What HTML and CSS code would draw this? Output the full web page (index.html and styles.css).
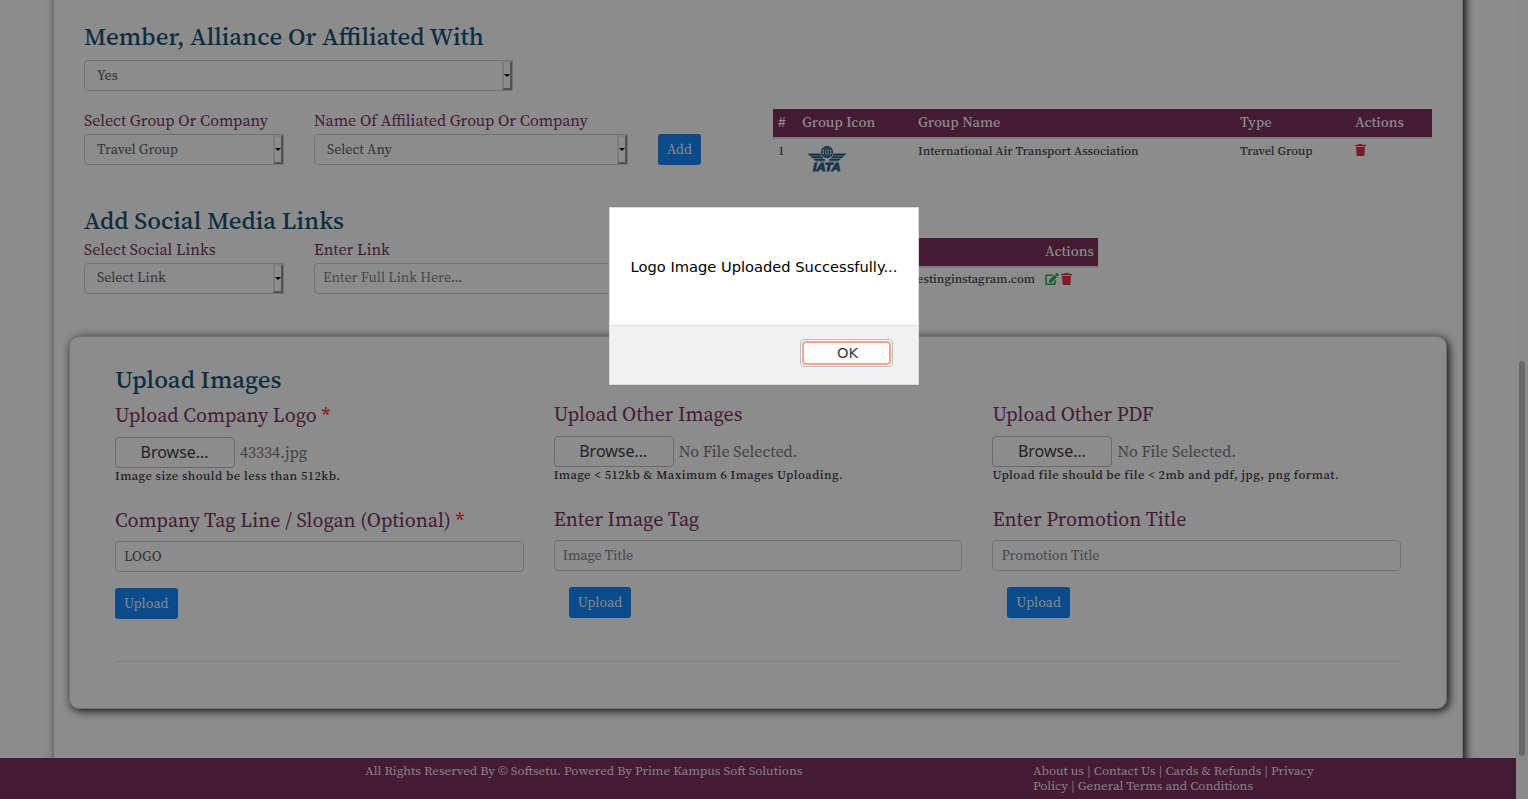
FILE: index.html
```html
<!DOCTYPE html>
<html lang="en">
<head>
<meta charset="utf-8">
<title>Company Profile</title>
<link rel="stylesheet" href="styles.css">
</head>
<body>
<svg class="defs" width="0" height="0">
  <symbol id="trash" viewBox="0 0 448 512" preserveAspectRatio="none"><path fill="currentColor" d="M42 128l22 350a36 36 0 0 0 36 34h248a36 36 0 0 0 36-34l22-350zM432 32H312l-9.400-18.700A24 24 0 0 0 281.100 0H166.800a23.700 23.700 0 0 0-21.400 13.300L136 32H16A16 16 0 0 0 0 48v32a16 16 0 0 0 16 16h416a16 16 0 0 0 16-16V48a16 16 0 0 0-16-16z"/></symbol>
  <symbol id="edit" viewBox="0 0 576 512"><path fill="currentColor" d="M402.600 83.200l90.200 90.200c3.800 3.800 3.800 10 0 13.800L274.400 405.600l-92.800 10.300c-12.400 1.400-22.900-9.100-21.500-21.500l10.300-92.800L388.800 83.200c3.800-3.800 10-3.800 13.800 0zm162-22.900l-48.800-48.800c-15.200-15.200-39.900-15.200-55.200 0l-35.400 35.400c-3.800 3.800-3.800 10 0 13.800l90.200 90.200c3.800 3.800 10 3.800 13.800 0l35.400-35.400c15.200-15.300 15.200-40 0-55.200zM384 346.200V448H64V128h229.800c3.200 0 6.200-1.300 8.500-3.500l40-40c7.600-7.600 2.200-20.500-8.500-20.500H48C21.500 64 0 85.500 0 112v352c0 26.500 21.500 48 48 48h352c26.500 0 48-21.500 48-48V306.200c0-10.700-12.900-16-20.500-8.500l-40 40c-2.200 2.300-3.500 5.300-3.500 8.500z"/></symbol>
</svg>
<div class="page">
  <div class="main">
    <div class="content">
      <div class="container">
        <h4 class="title">Member, Alliance Or Affiliated With</h4>
        <div class="select select-wide"><span>Yes</span><i class="arrow"></i></div>

        <div class="row row-group">
          <div class="field field-a"><label>Select Group Or Company</label><div class="select"><span>Travel Group</span><i class="arrow"></i></div></div>
          <div class="field field-b"><label>Name Of Affiliated Group Or Company</label><div class="select"><span>Select Any</span><i class="arrow"></i></div></div>
          <button class="btn btn-add">Add</button>
          <div class="table table-groups">
            <div class="tr th"><span>#</span><span>Group Icon</span><span>Group Name</span><span>Type</span><span>Actions</span></div>
            <div class="tr td">
              <span>1</span>
              <span><svg class="iata" width="40" height="28" viewBox="0 0 40 28">
                <g fill="none" stroke="#13334b"><circle cx="20" cy="7" r="5.400" stroke-width="1.400"/><ellipse cx="20" cy="7" rx="2.500" ry="5.400" stroke-width="1.200"/><path d="M20 1.500v11M14.500 7h11M15.500 4h9M15.500 10h9" stroke-width="1.200"/></g>
                <g fill="#13334b"><path d="M.5 8.600H13l2.500 4.400 2.500 2.500-1 1.200H9.500zM39.500 8.600H27L24.500 13 22 15.500l1 1.200h7.500z" opacity=".45"/><path d="M1 8.800h12.300l1 1.700H2.300zM3.500 11.500h11.300l1.500 1.600H5zM6.500 14h11l1 1.500H8zM39 8.800H26.700l-1 1.700h12zM36.500 11.500H25.200l-1.500 1.600H35zM33.500 14h-11l-1 1.500H32z"/></g>
                <text x="6" y="26.200" textLength="27.500" lengthAdjust="spacingAndGlyphs">IATA</text>
              </svg></span>
              <span>International Air Transport Association</span><span>Travel Group</span>
              <span><svg class="ico red" width="11" height="12"><use href="#trash"/></svg></span>
            </div>
          </div>
        </div>

        <h4 class="title title-social">Add Social Media Links</h4>
        <div class="row row-social">
          <div class="field field-a"><label>Select Social Links</label><div class="select"><span>Select Link</span><i class="arrow"></i></div></div>
          <div class="field field-b"><label>Enter Link</label><div class="input placeholder">Enter Full Link Here...</div></div>
          <div class="table table-links">
            <div class="tr th"><span></span><span>Actions</span></div>
            <div class="tr td"><span class="link">estinginstagram.com</span><span class="acts"><svg class="ico green" width="14" height="12"><use href="#edit"/></svg><svg class="ico red" width="11" height="12"><use href="#trash"/></svg></span></div>
          </div>
        </div>

        <div class="card">
          <h4 class="title">Upload Images</h4>
          <div class="uploads">
            <div class="upload first">
              <label>Upload Company Logo <b>*</b></label>
              <div class="file"><span class="browse">Browse…</span><span>43334.jpg</span></div>
              <p class="note">Image size should be less than 512kb.</p>
              <label>Company Tag Line / Slogan (Optional) <b>*</b></label>
              <div class="input">LOGO</div>
              <button class="btn">Upload</button>
            </div>
            <div class="upload">
              <label>Upload Other Images</label>
              <div class="file"><span class="browse">Browse…</span><span>No File Selected.</span></div>
              <p class="note">Image &lt; 512kb &amp; Maximum 6 Images Uploading.</p>
              <label>Enter Image Tag</label>
              <div class="input placeholder">Image Title</div>
              <button class="btn indent">Upload</button>
            </div>
            <div class="upload">
              <label>Upload Other PDF</label>
              <div class="file"><span class="browse">Browse…</span><span>No File Selected.</span></div>
              <p class="note">Upload file should be file &lt; 2mb and pdf, jpg, png format.</p>
              <label>Enter Promotion Title</label>
              <div class="input placeholder">Promotion Title</div>
              <button class="btn indent">Upload</button>
            </div>
          </div>
          <div class="rule"></div>
        </div>
      </div>
    </div>
    <footer class="footer">
      <div class="copy">All Rights Reserved By © Softsetu. Powered By Prime Kampus Soft Solutions</div>
      <div class="links">About us | Contact Us | Cards &amp; Refunds | Privacy<br>Policy | General Terms and Conditions</div>
    </footer>
  </div>
  <div class="scroll"><div class="thumb"></div></div>
</div>
<div class="modal">
  <div class="modal-body">Logo Image Uploaded Successfully...</div>
  <div class="modal-foot"><button class="ok"><span>OK</span></button></div>
</div>
</body>
</html>
```
FILE: styles.css
```css
* { box-sizing: border-box; }
body {
  margin: 0; height: 799px; overflow: hidden; background: #8c8c8c;
  font-family: "Source Serif 4", "Liberation Serif", serif; color: #24272a;
}
.defs { position: absolute; }
h4, p { margin: 0; }
label { display: block; color: #431b34; white-space: nowrap; }
label b { color: #8c0808; font-weight: 500; }
.page { display: flex; height: 799px; }
.main { width: 1516px; display: flex; flex-direction: column; }
.content { height: 758px; padding-left: 53px; overflow: hidden; }
.container {
  width: 1410px; height: 858px; margin-top: -20px; padding: 41px 0 0 30px;
  border: 1px solid #717171; border-width: 0 1px 0 1px;
  box-shadow: 3px 0 8px #1a1a1a;
  background: #8c8c8c;
}
.title { font-size: 24.900px; line-height: 30px; font-weight: 500; color: #0b2d40; white-space: nowrap; }

.row { display: flex; }
.row-group { margin-top: 18px; height: 96px; }
.row-social { margin-top: 3px; height: 98px; }
.field label { font-size: 16px; line-height: 22px; height: 25px; }
.row-social .field label { line-height: 23px; }
.field-a { width: 200px; margin-right: 30px; }
.field-b { width: 314px; margin-right: 30px; }
.select, .input {
  height: 31px; border: 1px solid #717477; border-radius: 4px;
  font-size: 14px; line-height: 29px; color: #303437;
}
.row-social .select, .row-social .input { line-height: 27px; }
.select { display: flex; padding-left: 12px; justify-content: space-between; border-radius: 4px 0 0 4px; }
.select-wide { width: 429px; margin-top: 9px; }
.input { padding-left: 8px; }
.placeholder { color: #44494d; }
.arrow {
  width: 10px; border: 2px solid; border-color: #818181 #525252 #525252 #7c7c7c;
  display: flex; align-items: center; justify-content: center;
}
.arrow::after { content: ""; border: 3px solid transparent; border-top-color: #000; border-bottom: 0; }
.btn {
  height: 31px; padding: 0 9px; border: 0; border-radius: 3px; background: #0b4a8b;
  color: #8c8c8c; font: 400 14px/29px "Source Serif 4", "Liberation Serif", serif; display: block;
}
.btn-add { width: 43px; margin-top: 25px; }
.upload .btn { width: 62.500px; padding: 0; }

.tr { display: grid; }
.table-groups { width: 659px; margin-left: 72px; }
.table-groups .tr { grid-template-columns: 24px 116px 322px 115px 1fr; padding-left: 5px; }
.table-links { width: 325px; margin-left: 115px; }
.table-links .tr { grid-template-columns: 272px 1fr; }
.th { background: #451b34; color: #8c8c8c; font-size: 14.500px; font-weight: 500; line-height: 26px; height: 30px; border-bottom: 2px solid #7c7c7c; }
.td { font-size: 12.450px; font-weight: 500; line-height: 23px; height: 34px; }
.table-links .td { line-height: 22px; }
.iata { display: block; margin: 6px 0 0 5px; }
.iata text { font: italic 900 11px "Liberation Sans", sans-serif; fill: #13334b; stroke: #13334b; stroke-width: .8; }
.ico { display: block; margin-top: 5px; }
.red { color: #7a1d27; }
.green { color: #16602a; }
.link { text-align: right; padding-right: 10px; }
.acts { display: flex; gap: 2px; }
.title-social { width: 400px; }

.card {
  width: 1378px; height: 373px; margin-left: -15px; padding: 27px 45px 0;
  border: 1px solid #717171; border-radius: 10px; background: #8c8c8c;
  box-shadow: 2px 2px 8px #111;
}
.uploads { display: grid; grid-template-columns: repeat(3, 408.700px); gap: 30px; height: 267px; }
.upload { padding-top: 6px; }
.upload.first { padding-top: 7px; }
.upload label { font-size: 20px; line-height: 28px; }
.file { display: flex; margin-top: 8px; gap: 5px; height: 31px; font-size: 16px; line-height: 31px; color: #404346; }
.browse {
  width: 120px; border: 1px solid #6b6b6b; border-radius: 4px; text-align: center;
  font: 16px/29px "Noto Sans", sans-serif; color: #232323; padding-right: 1px;
}
.note { font-size: 12.500px; font-weight: 500; letter-spacing: .44px; line-height: 15px; height: 38px; color: #1c1c1c; white-space: nowrap; }
.upload .input { margin: 7px 0 16px; }
.upload .indent { margin-left: 15px; }
.rule { height: 1px; background: #7e7e7e; }

.footer { height: 41px; background: #451b34; color: #848484; font-size: 13px; line-height: 15px; display: flex; padding: 5px 0 0 365px; position: relative; }
.copy { width: 668px; white-space: nowrap; }
.links { white-space: nowrap; font-size: 12.950px; }
.scroll { width: 12px; background: #8a8a8a; padding: 361px 3px 0; }
.thumb { width: 6px; height: 395px; border-radius: 3px; background: #696969; }

.modal {
  position: absolute; left: 609px; top: 207px; width: 310px; height: 178px;
  background: #fff; border: 1px solid #dadada;
  font-family: "DejaVu Sans", sans-serif; font-size: 14.670px; color: #000;
}
.modal-body { height: 117px; line-height: 118px; padding-left: 20.600px; white-space: nowrap; }
.modal-foot { height: 59px; background: #f1f1f1; border-top: 1px solid #e0e0e0; display: flex; justify-content: flex-end; padding: 13px 25px 0 0; }
.ok {
  width: 93px; height: 28px; padding: 1px; border: 1px solid #bdbdbd; border-radius: 4px; background: #f8f8f8;
  font: 14.670px/20px "DejaVu Sans", sans-serif; color: #3c3c3c;
}
.ok span { display: block; height: 24px; border: 2px solid #f2a68c; border-radius: 4px; background: #fcfcfc; padding-left: 2px; }
```
